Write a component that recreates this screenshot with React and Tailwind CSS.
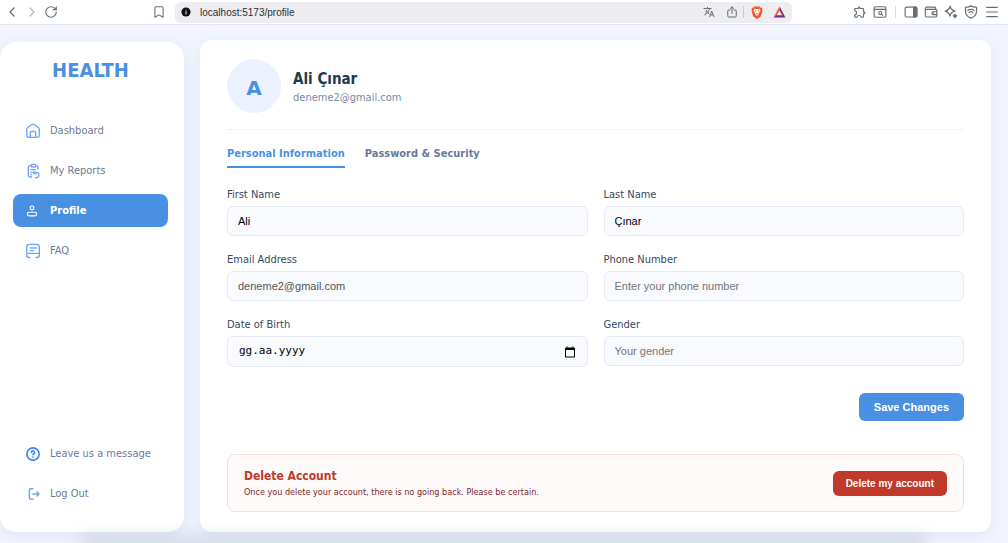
import { useState } from "react";
import { Bookmark, ChevronLeft, ChevronRight, Menu, RotateCw } from "lucide-react";
import { MdOutlineExtension, MdTranslate } from "react-icons/md";

const svgProps = {
  viewBox: "0 0 24 24",
  fill: "none",
  stroke: "currentColor",
  strokeWidth: 2,
  strokeLinecap: "round",
  strokeLinejoin: "round",
  "aria-hidden": true,
};

function HomeIcon() {
  return (
    <svg {...svgProps} className="size-4">
      <path d="M2.500 9.500c0-1 .4-1.700 1.200-2.300l6-4.700c1.400-1.100 3.200-1.100 4.600 0l6 4.700c.8.600 1.200 1.300 1.200 2.300V18c0 2-1.400 3.500-3.500 3.500H6c-2.100 0-3.500-1.500-3.500-3.500z" />
      <path d="M8 21v-6.500c0-1 .7-1.800 1.800-1.800h4.400c1.100 0 1.800.8 1.800 1.800V21" />
    </svg>
  );
}

function ReportsIcon() {
  return (
    <svg {...svgProps} className="size-4">
      <rect x="9" y="2" width="7" height="4" rx="1.500" />
      <path d="M9 4H7.500C6 4 5 5 5 6.500v12C5 20 6 21 7.500 21H10" />
      <path d="M16 4h1c1.500 0 2.500 1 2.500 2.500V9" />
      <path d="M9 10h6M9 14h2M9 17.500h1" />
      <path d="M13.500 12.500v3.500H17M14 15.500c2-2.500 7-2 7 2.500 0 3-2.500 4.500-5 4" />
    </svg>
  );
}

function ProfileIcon() {
  return (
    <svg {...svgProps} strokeWidth={1.600} className="size-4">
      <circle cx="10.500" cy="7.500" r="2.900" />
      <rect x="3.500" y="13.800" width="14" height="5.500" rx="2.700" />
    </svg>
  );
}

function FaqIcon() {
  return (
    <svg {...svgProps} className="size-4">
      <path d="M2.500 15V6c0-2.500 1.300-4 4-4h11c2.700 0 4 1.500 4 4v9" />
      <path d="M21.500 15.500H5a2.500 2.500 0 0 0-2.500 2.500c0 2.300 1.200 3.800 3.500 3.800h1.500M21.500 15.500V18c0 2.500-1.200 3.800-3.500 3.800h-1.500" />
      <path d="M8 7.500h9M8 11.500h5" />
    </svg>
  );
}

function HelpIcon() {
  return (
    <svg {...svgProps} strokeWidth={2.400} className="size-4 text-[#3b82f6]">
      <circle cx="12" cy="12" r="9.200" />
      <path d="M9.500 9.500c.3-3 5-2.700 5 .2 0 1.800-2.500 2-2.500 3.500M12 16.500v.2" />
    </svg>
  );
}

function LogoutIcon() {
  return (
    <svg {...svgProps} strokeWidth={2.200} className="size-4">
      <path d="M12 4H9C7.300 4 6.500 4.800 6.500 6.500v11C6.500 19.200 7.300 20 9 20h3" />
      <path d="M12 12h9M18 9l3 3-3 3" />
    </svg>
  );
}

function ShareIcon() {
  return (
    <svg {...svgProps} className="size-3">
      <path d="M8 8H5.500C4 8 3.500 8.700 3.500 10v10c0 1.500.6 2 2 2h13c1.400 0 2-.5 2-2V10c0-1.300-.5-2-2-2H16M12 15V2M8.500 5 12 1.800 15.500 5" />
    </svg>
  );
}

function BraveIcon() {
  return (
    <svg viewBox="0 0 24 26" className="h-[13px] w-3" aria-hidden="true">
      <path fill="#fb5426" d="M7 1h10l2 2.300 2.200-.3L23 6l-.7 2.200.5 2-3 9.800c-.4 1.400-1.200 2-2.300 2.700L12 26l-5.500-3.300C5.400 22 4.600 21.400 4.200 20L1.200 10.200l.5-2L1 6l1.800-3 2.200.3z" />
      <path fill="#fff" d="m5 9 2.500-3.500L10 6.200h4l2.500-.7L19 9l-3 4.500c-.4.700-.2 1.300.3 1.900L12 20l-4.300-4.600c.5-.6.700-1.200.3-1.900z" />
      <path fill="#fb5426" d="m7.500 8.700 3 .7-.7 3.300 1.300 2h1.800l1.300-2-.7-3.300 3-.7-3 5 .8 1.300L12 17.500 9.700 15l.8-1.300z" />
    </svg>
  );
}

function TriangleIcon() {
  return (
    <svg viewBox="0 0 24 22" className="h-3 w-[13px]" aria-hidden="true">
      <path fill="#fb5426" d="M12 1v7l-5.500 9.500L1 21z" />
      <path fill="#9e1f63" d="M12 1l11 20-5.500-3.500L12 8z" />
      <path fill="#662d91" d="M1 21l5.500-4h11L23 21z" />
    </svg>
  );
}

function TabSearchIcon() {
  return (
    <svg {...svgProps} className="size-3.5">
      <rect x="2" y="3" width="20" height="18" rx="2" />
      <path d="M2 7.500h20M14.500 16l2 1.500" />
      <circle cx="12.500" cy="13.800" r="2.600" />
    </svg>
  );
}

function SidePanelIcon() {
  return (
    <svg {...svgProps} className="size-3.5">
      <rect x="2" y="3.500" width="20" height="17" rx="2" />
      <path fill="currentColor" d="M16.500 3.500H20a2 2 0 0 1 2 2v13a2 2 0 0 1-2 2h-3.500z" />
    </svg>
  );
}

function WalletIcon() {
  return (
    <svg {...svgProps} className="size-3.5">
      <path d="M20 7.500V5.500c0-1.200-.7-2-2-2H4.500a2 2 0 0 0 0 4H20c1.200 0 2 .8 2 2v9c0 1.200-.8 2-2 2H5c-1.700 0-2.700-1-2.700-2.700V6" />
      <path d="M22 11.500h-6a2.500 2.500 0 0 0 0 5h6M16 14h.5" />
    </svg>
  );
}

function SparkleIcon() {
  return (
    <svg {...svgProps} className="size-3.5">
      <path d="M10.500 2c.8 5 2.500 7 8.500 8.500-3 .8-5 1.700-6.300 3.200-1.200 1.300-1.700 3-2.200 5.300-1.200-5-3-7-8.500-8.500C8 9 9.700 7 10.500 2z" />
      <path fill="currentColor" d="M19 15.500c.5 2 1.200 2.700 3 3.200-1.800.5-2.500 1.200-3 3.200-.5-2-1.200-2.700-3-3.200 1.800-.5 2.500-1.200 3-3.200z" />
    </svg>
  );
}

function VpnIcon() {
  return (
    <svg {...svgProps} className="size-3.5">
      <path d="M12 1.500c3 1.800 6 2.300 9.500 2.500v6.500c0 5.500-4 9.500-9.500 12-5.500-2.500-9.500-6.500-9.500-12V4C6 3.800 9 3.300 12 1.500z" />
      <path d="M6.500 9.500c3.500-2.600 7.500-2.600 11 0M8.800 12.700c2-1.500 4.400-1.500 6.400 0M12 15.800v.2" />
    </svg>
  );
}

function CalendarIcon() {
  return (
    <svg viewBox="0 0 24 24" className="size-3" aria-hidden="true">
      <path fill="currentColor" d="M20 3h-1V1h-2v2H7V1H5v2H4c-1.100 0-2 .9-2 2v16c0 1.100.9 2 2 2h16c1.100 0 2-.9 2-2V5c0-1.100-.9-2-2-2zm0 18H4V8h16v13z" />
    </svg>
  );
}

function ToolButton({ label, children }) {
  return (
    <button type="button" aria-label={label} className="flex items-center justify-center">
      {children}
    </button>
  );
}

function BrowserBar() {
  return (
    <header className="flex h-[25px] shrink-0 items-center border-b border-[#e6e7ee] bg-white pr-2 pl-1 text-[#6b6d74]">
      <div className="flex w-[148px] shrink-0 items-center gap-1">
        <ToolButton label="Back"><ChevronLeft className="size-4" strokeWidth={2} /></ToolButton>
        <ToolButton label="Forward"><ChevronRight className="size-4 text-[#b9bac0]" strokeWidth={2} /></ToolButton>
        <ToolButton label="Reload"><RotateCw className="size-3.5" strokeWidth={2} /></ToolButton>
      </div>
      <ToolButton label="Bookmark"><Bookmark className="size-3.5" strokeWidth={1.800} /></ToolButton>
      <div className="ml-[9px] flex h-[21px] w-[617px] min-w-0 items-center gap-[9px] rounded-md bg-[#ececf1] px-1.5">
        <svg viewBox="0 0 24 24" className="size-2.5 shrink-0" aria-hidden="true">
          <circle cx="12" cy="12" r="11" fill="#101014" />
          <path d="M12 11v6M12 7v.2" stroke="#ececf1" strokeWidth="2.500" strokeLinecap="round" />
        </svg>
        <input
          aria-label="Address"
          defaultValue="localhost:5173/profile"
          className="min-w-0 flex-1 bg-transparent font-['Liberation_Sans',Arial,sans-serif] text-[10px] text-[#2c2d33] outline-none"
        />
        <div className="flex items-center">
          <ToolButton label="Translate"><MdTranslate className="size-3" /></ToolButton>
          <span className="ml-[11px] flex"><ToolButton label="Share"><ShareIcon /></ToolButton></span>
          <span className="mx-[5px] h-3 w-px bg-[#c9cad1]" />
          <span className="mx-0.5 flex"><ToolButton label="Shields"><BraveIcon /></ToolButton></span>
          <span className="ml-2 flex"><ToolButton label="Rewards"><TriangleIcon /></ToolButton></span>
        </div>
      </div>
      <div className="ml-auto flex items-center gap-1.5">
        <ToolButton label="Extensions"><MdOutlineExtension className="size-3.5" /></ToolButton>
        <ToolButton label="Search tabs"><TabSearchIcon /></ToolButton>
        <span className="mx-0.5 h-3 w-px bg-[#d9dae0]" />
        <ToolButton label="Side panel"><SidePanelIcon /></ToolButton>
        <ToolButton label="Wallet"><WalletIcon /></ToolButton>
        <ToolButton label="Assistant"><SparkleIcon /></ToolButton>
        <ToolButton label="VPN"><VpnIcon /></ToolButton>
        <ToolButton label="Menu"><Menu className="size-4" strokeWidth={1.800} /></ToolButton>
      </div>
    </header>
  );
}

function NavItem({ icon, label, active }) {
  return (
    <a
      href="#"
      aria-current={active ? "page" : undefined}
      className={
        active
          ? "flex h-[33px] items-center gap-[9px] rounded-lg bg-[#4a90e2] px-3 text-[11px] leading-4 font-bold text-white"
          : "flex h-[33px] items-center gap-[9px] rounded-lg px-3 text-[11px] leading-4 text-[#6b7a99]"
      }
    >
      <span className={active ? "text-white" : "text-[#6ba5f7]"}>{icon}</span>
      {label}
    </a>
  );
}

function Sidebar() {
  return (
    <aside className="mt-[17px] flex w-[184px] shrink-0 flex-col rounded-2xl bg-white pt-3 pr-4 pb-[22px] pl-[13px] shadow-[0_4px_16px_rgba(90,110,170,0.12)]">
      <div className="text-center text-[20px] leading-8 font-bold text-[#4a90e2]">HEALTH</div>
      <nav className="mt-7 flex flex-1 flex-col gap-[7px]">
        <NavItem icon={<HomeIcon />} label="Dashboard" />
        <NavItem icon={<ReportsIcon />} label="My Reports" />
        <NavItem icon={<ProfileIcon />} label="Profile" active />
        <NavItem icon={<FaqIcon />} label="FAQ" />
      </nav>
      <div className="flex flex-col gap-[7px]">
        <NavItem icon={<HelpIcon />} label="Leave us a message" />
        <NavItem icon={<LogoutIcon />} label="Log Out" />
      </div>
    </aside>
  );
}

const fieldBox = "rounded-md border border-[#e6eaf6] bg-[#f9fafd]";

function Field({ id, label, className, ...rest }) {
  return (
    <div>
      <label htmlFor={id} className="block text-[11px] leading-4 text-[#34495e]">{label}</label>
      <input
        id={id}
        className={`mt-[3px] block h-[30px] w-full px-2.5 font-['Liberation_Sans',Arial,sans-serif] text-[11px] outline-none placeholder:text-[#757575] ${fieldBox} ${className || "text-black"}`}
        {...rest}
      />
    </div>
  );
}

export default function App() {
  const [tab, setTab] = useState("personal");
  const tabClass = (name) =>
    name === tab
      ? "border-b-2 border-[#4a90e2] pb-1 text-[#4a90e2]"
      : "border-b-2 border-transparent pb-1 text-[#6b7a99]";

  return (
    <div className="relative flex min-h-screen flex-col overflow-hidden bg-[#f2f5ff] font-['DejaVu_Sans_Condensed','Noto_Sans',sans-serif]">
      <BrowserBar />
      <div className="flex flex-1 gap-4 pr-[17px] pb-[11px]">
        <Sidebar />
        <main className="mt-[15px] min-w-0 flex-1 rounded-xl bg-white px-[27px] pt-[19px] pb-[19px] shadow-[0_4px_16px_rgba(90,110,170,0.10)]">
          <div className="flex items-center gap-3 border-b border-[#f0f2f7] pb-4">
            <div className="flex size-[54px] items-center justify-center rounded-full bg-[#ecf1ff] pt-1 font-['DejaVu_Sans',sans-serif] text-[20px] font-bold text-[#4a90e2]">A</div>
            <div className="pt-[3px]">
              <h1 className="text-[15px] leading-5 font-bold text-[#24384c]">Ali Çınar</h1>
              <p className="text-[11px] leading-[18px] text-[#7a88a6]">deneme2@gmail.com</p>
            </div>
          </div>

          <div role="tablist" className="mt-4 flex gap-5 text-[11px] leading-4 font-bold">
            <button type="button" role="tab" aria-selected={tab === "personal"} onClick={() => setTab("personal")} className={tabClass("personal")}>
              Personal Information
            </button>
            <button type="button" role="tab" aria-selected={tab === "security"} onClick={() => setTab("security")} className={tabClass("security")}>
              Password &amp; Security
            </button>
          </div>

          <form onSubmit={(e) => e.preventDefault()}>
            <div className="mt-[19px] grid grid-cols-2 gap-4">
              <Field id="first" label="First Name" defaultValue="Ali" />
              <Field id="last" label="Last Name" defaultValue="Çınar" />
              <Field id="email" label="Email Address" defaultValue="deneme2@gmail.com" className="text-[#545454]" readOnly />
              <Field id="phone" label="Phone Number" placeholder="Enter your phone number" />
              <div>
                <label htmlFor="birth" className="block text-[11px] leading-4 text-[#34495e]">Date of Birth</label>
                <div className={`mt-[3px] flex h-[31px] items-center px-[11px] ${fieldBox}`}>
                  <input
                    id="birth"
                    placeholder="gg.aa.yyyy"
                    className="min-w-0 flex-1 bg-transparent font-['DejaVu_Sans_Mono',monospace] text-[11px] outline-none placeholder:text-black"
                  />
                  <button type="button" aria-label="Open calendar" className="text-black"><CalendarIcon /></button>
                </div>
              </div>
              <Field id="gender" label="Gender" placeholder="Your gender" />
            </div>
            <div className="mt-[26px] flex justify-end">
              <button type="submit" className="h-7 rounded-md bg-[#4a90e2] px-[15px] font-['Liberation_Sans',Arial,sans-serif] text-[11px] font-bold text-white">
                Save Changes
              </button>
            </div>
          </form>

          <section className="mt-[33px] flex items-center justify-between rounded-lg border border-[#fbdcdf] bg-[#fffafa] px-4 py-3">
            <div>
              <h2 className="text-[12px] leading-[18px] font-bold text-[#c0392b]">Delete Account</h2>
              <p className="text-[9px] leading-[14px] text-[#7f1d1d]">Once you delete your account, there is no going back. Please be certain.</p>
            </div>
            <button type="button" className="h-[25px] rounded-md bg-[#c0392b] px-[13px] font-['Liberation_Sans',Arial,sans-serif] text-[10px] font-bold text-white">
              Delete my account
            </button>
          </section>
        </main>
      </div>
      <div className="pointer-events-none absolute inset-x-20 -bottom-3 h-5 rounded-full bg-[#70768a]/20 blur-[8px]" />
    </div>
  );
}
